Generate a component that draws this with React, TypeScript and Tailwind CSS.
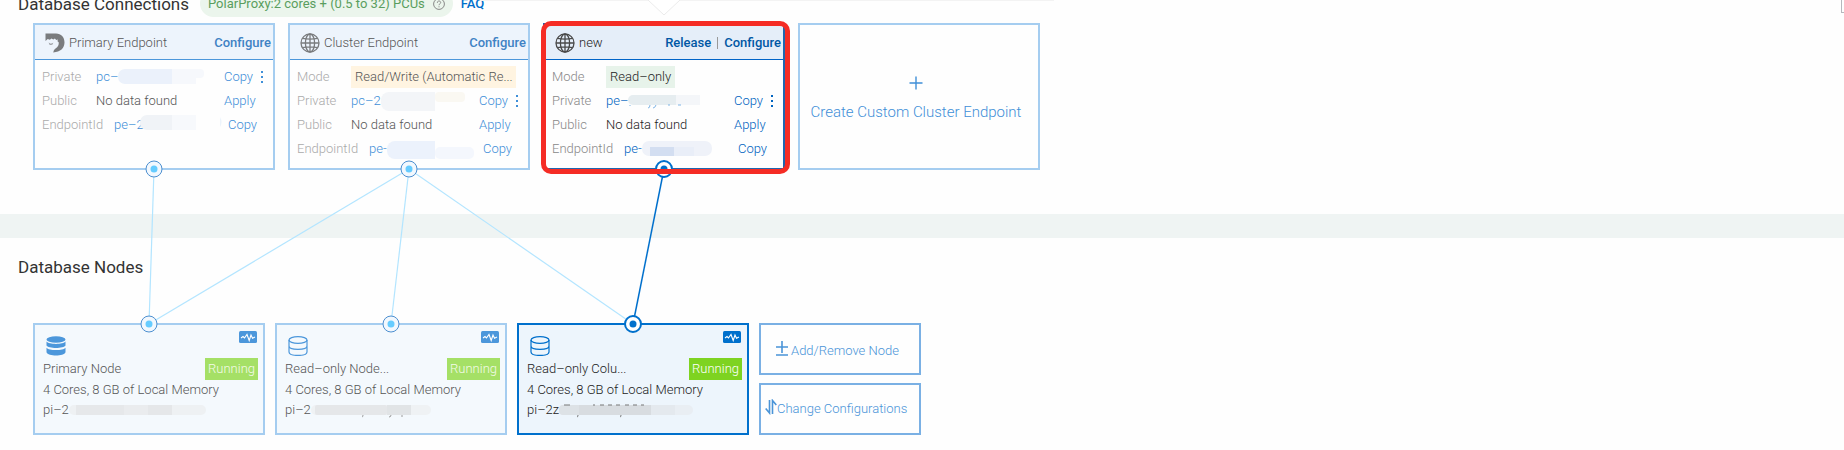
import { ReactNode } from 'react';
import clsx from 'clsx';

interface EndpointRow {
  label: string;
  value: string;
  action?: string;
  menu?: boolean;
  kind?: 'tag' | 'link' | 'text';
  mask?: ReactNode;
}

interface Endpoint {
  name: string;
  icon: 'primary' | 'globe';
  active?: boolean;
  rows: EndpointRow[];
}

interface DbNode {
  name: string;
  id: string;
  primary?: boolean;
  active?: boolean;
  mask: ReactNode;
}

const endpoints: Endpoint[] = [
  {
    name: 'Primary Endpoint',
    icon: 'primary',
    rows: [
      {
        label: 'Private',
        value: 'pc–',
        action: 'Copy',
        menu: true,
        kind: 'link',
        mask: (
          <Mask>
            <rect width="54" height="15" rx="7" fill="#ebf1fb" />
            <rect x="40" width="14" height="15" fill="#ebf1fb" />
            <rect x="54" width="32" height="9" rx="4" fill="#f6f8fc" />
            <rect x="54" width="24" height="15" fill="#f6f8fc" />
          </Mask>
        ),
      },
      { label: 'Public', value: 'No data found', action: 'Apply', kind: 'text' },
      {
        label: 'EndpointId',
        value: 'pe–2',
        action: 'Copy',
        kind: 'link',
        mask: (
          <Mask shift>
            <rect y="-2" width="32" height="15" rx="7" fill="#f0f3f7" />
            <rect x="20" y="-2" width="12" height="15" fill="#f0f3f7" />
            <rect x="32" y="-2" width="24" height="15" fill="#f7f9fc" />
            <path d="M80 0q3 5 0 10z" fill="#edf4fc" />
          </Mask>
        ),
      },
    ],
  },
  {
    name: 'Cluster Endpoint',
    icon: 'globe',
    rows: [
      { label: 'Mode', value: 'Read/Write (Automatic Re...', kind: 'tag' },
      {
        label: 'Private',
        value: 'pc–2',
        action: 'Copy',
        menu: true,
        kind: 'link',
        mask: (
          <Mask>
            <rect y="-1" width="54" height="19" rx="8" fill="#f3f5f8" />
            <rect x="40" y="-1" width="14" height="19" fill="#f3f5f8" />
            <rect x="54" y="-1" width="30" height="10" rx="4" fill="#faf8f2" />
          </Mask>
        ),
      },
      { label: 'Public', value: 'No data found', action: 'Apply', kind: 'text' },
      {
        label: 'EndpointId',
        value: 'pe-',
        action: 'Copy',
        kind: 'link',
        mask: (
          <Mask>
            <rect width="48" height="18" rx="8" fill="#ecf2fc" />
            <rect x="30" width="18" height="18" fill="#ecf2fc" />
            <rect x="48" y="6" width="39" height="12" rx="5" fill="#f4f7fd" />
          </Mask>
        ),
      },
    ],
  },
  {
    name: 'new',
    icon: 'globe',
    active: true,
    rows: [
      { label: 'Mode', value: 'Read–only', kind: 'tag' },
      {
        label: 'Private',
        value: 'pe–',
        action: 'Copy',
        menu: true,
        kind: 'link',
        mask: (
          <Mask>
            <rect y="2" width="48" height="10" rx="5" fill="#e6edf0" />
            <rect x="30" y="2" width="18" height="10" fill="#e6edf0" />
            <rect x="48" y="2" width="24" height="10" fill="#f4f6f9" />
            <path d="M2 12v1M22 12q0 3-2 3M28 12q-1 3-3 3M40 12h2M50 12h3" stroke="#7fb5e6" fill="none" />
          </Mask>
        ),
      },
      { label: 'Public', value: 'No data found', action: 'Apply', kind: 'text' },
      {
        label: 'EndpointId',
        value: 'pe-',
        action: 'Copy',
        kind: 'link',
        mask: (
          <Mask>
            <rect width="70" height="15" rx="7" fill="#eff2f9" />
            <rect x="8" y="6" width="24" height="9" fill="#d3def1" />
            <rect x="32" y="6" width="20" height="9" fill="#e9eef8" />
          </Mask>
        ),
      },
    ],
  },
];

const nodes: DbNode[] = [
  {
    name: 'Primary Node',
    id: 'pi–2',
    primary: true,
    mask: (
      <Mask wide>
        <rect width="137" height="10" rx="5" fill="#eef1f3" />
        <rect x="7" width="48" height="10" fill="#e6e8ea" />
        <rect x="55" width="24" height="10" fill="#eaecee" />
        <rect x="79" width="24" height="10" fill="#e5e7e9" />
      </Mask>
    ),
  },
  {
    name: 'Read–only Node...',
    id: 'pi–2',
    mask: (
      <Mask wide>
        <rect width="120" height="10" rx="5" fill="#eff2f4" />
        <rect x="4" width="72" height="10" rx="2" fill="#e5e7e9" />
        <rect x="76" width="24" height="10" fill="#e1e4e6" />
        <path d="M52 10q0 2-1 2M80 10q0 2-2 2M91 10v2" stroke="#9a9a9a" fill="none" />
      </Mask>
    ),
  },
  {
    name: 'Read–only Colu...',
    id: 'pi–2z',
    active: true,
    mask: (
      <Mask wide>
        <rect width="134" height="10" rx="5" fill="#e9eef3" />
        <rect width="44" height="10" rx="4" fill="#dde2e6" />
        <rect x="20" width="72" height="10" fill="#d8dce0" />
        <rect x="92" width="24" height="10" fill="#e4e9ee" />
        <path d="M5 0h6M34 0h2M41 0h4M49 0h4M57 0h4M66 0h4M74 0h4M82 0h3M19 10q0 2-1 2M62 10q0 2-1 2" stroke="#777" fill="none" />
      </Mask>
    ),
  },
];

// grey blocks hiding the rest of an id
function Mask({ children, wide, shift }: { children: ReactNode; wide?: boolean; shift?: boolean }) {
  return (
    <svg
      className={clsx('h-5 shrink-0', wide ? 'w-[140px]' : 'w-[88px]', shift && '-ml-1')}
      viewBox={wide ? '0 -5 140 20' : '0 -2 88 20'}
    >
      {children}
    </svg>
  );
}

function GlobeIcon() {
  return (
    <svg className="size-5" viewBox="0 0 20 20" fill="none" stroke="#4a4a4a" strokeWidth="1.3">
      <circle cx="10" cy="10" r="9" />
      <ellipse cx="10" cy="10" rx="4.6" ry="9" />
      <path d="M10 1v18M2.5 5.4q7.5 1.6 15 0M1 10h18M2.5 14.6q7.5-1.6 15 0" />
    </svg>
  );
}

function PrimaryIcon() {
  return (
    <svg className="size-5" viewBox="0 0 20 20" fill="#4a4a4a">
      <path d="M.5.500h10.500c5.200 0 8.500 3.700 8.500 8.800 0 5.900-4 9.700-11.300 10.200l.8-2.600 1.500-1.300c2.500-1.600 3.600-3.700 3.200-6.300l-1.200-1.100.3-1.700-1.600.5-1.300-1.500-1.600 1-1.900-.9-1.500 1.100-2.200-.6L.5 8z" />
      <path d="M3.600 9.600l2.200 1.200 2.500-1.100-1 2-2.600.3z" opacity=".7" />
    </svg>
  );
}

function DbIcon({ solid, active }: { solid?: boolean; active?: boolean }) {
  if (solid) {
    return (
      <svg className="size-5" viewBox="0 0 20 20" fill="#4c97db">
        <ellipse cx="10" cy="3.5" rx="9.5" ry="3.3" />
        <path d="M.5 5.5c2 3.200 17 3.200 19 0v4c-1.500 3.300-17.500 3.300-19 0z" />
        <path d="M.5 11.700c2 3.200 17 3.200 19 0v4.500c-1.500 4.300-17.500 4.300-19 0z" />
      </svg>
    );
  }
  return (
    <svg className="size-5" viewBox="0 0 20 20" fill="none" stroke={active ? '#0070cc' : '#4c97db'} strokeWidth="1.2">
      <ellipse cx="10" cy="4" rx="9" ry="3.4" />
      <path d="M1 4v12c0 4.600 18 4.600 18 0V4M1 10c0 4.500 18 4.500 18 0" />
    </svg>
  );
}

function EndpointCard({ endpoint }: { endpoint: Endpoint }) {
  const { active } = endpoint;
  const link = active ? 'text-[#0064c0]' : 'text-[#3f8fd8]';
  const strong = active ? 'text-[#0058a5]' : 'text-[#3f82c4]';

  return (
    <article className={clsx('h-[147px] w-[242px] shrink-0 border-2', active ? 'border-[#1f66b0]' : 'border-[#a5cdf0]')}>
      <header
        className={clsx(
          'flex h-[35px] items-center border-b pl-2.5 pr-0.5 pt-0.5',
          active ? 'border-[#0064c8] bg-[#e5eef9]' : 'border-[#4c97db] bg-[#edf4fc]'
        )}
      >
        <span className={clsx('mr-1', !active && 'opacity-70')}>
          {endpoint.icon === 'globe' ? <GlobeIcon /> : <PrimaryIcon />}
        </span>
        <h3 className={clsx('flex-1 font-light', active ? 'text-[#222]' : 'text-[#555]')}>{endpoint.name}</h3>
        {active && (
          <>
            <button className={clsx('font-medium', strong)}>Release</button>
            <span className="mx-1.5 h-3 w-px bg-[#999]" />
          </>
        )}
        <button className={clsx('font-medium', strong)}>Configure</button>
      </header>
      <div className="py-[5px] pl-[7px] pr-2">
        {endpoint.rows.map((row) => {
          const isId = row.label === 'EndpointId';
          return (
            <div key={row.label} className="flex h-6 items-center">
              <span className={clsx('shrink-0', isId ? 'w-[72px]' : 'w-[54px]', active ? 'text-[#888]' : 'text-[#aaa]')}>
                {row.label}
              </span>
              {row.kind === 'tag' ? (
                <span
                  className={clsx(
                    'whitespace-nowrap px-1 leading-[22px]',
                    active ? 'bg-[#e7f3ea] text-[#222]' : 'w-[165px] bg-[#fff4e1] text-[#555]'
                  )}
                >
                  {row.value}
                </span>
              ) : (
                <span
                  className={clsx(
                    'flex shrink-0 items-center overflow-hidden',
                    isId ? 'w-[114px]' : 'w-[128px]',
                    row.kind === 'link' ? link : active ? 'text-[#222]' : 'text-[#555]'
                  )}
                >
                  {row.value}
                  {row.mask}
                </span>
              )}
              {row.action && <button className={link}>{row.action}</button>}
              {row.menu && (
                <button aria-label="More" className={clsx('ml-[5px]', link)}>
                  <svg className="h-3 w-2" viewBox="0 0 8 12" fill="currentColor">
                    <path d="M3 0h2v2H3zM3 5h2v2H3zM3 10h2v2H3z" />
                  </svg>
                </button>
              )}
            </div>
          );
        })}
      </div>
    </article>
  );
}

function NodeCard({ node }: { node: DbNode }) {
  const { active } = node;
  return (
    <article
      className={clsx(
        'flex h-28 w-[232px] shrink-0 flex-col border-2 pl-2 pr-[5px]',
        active ? 'border-[#0070cc] bg-[#edf5fc] text-[#222]' : 'border-[#a5cdf0] bg-[#f4f9fd] text-[#555]'
      )}
    >
      <div className="flex h-[31px] items-end justify-between pl-[3px] pr-px">
        <DbIcon solid={node.primary} active={active} />
        <button aria-label="Monitoring" className="self-start pt-1.5">
          <svg className="h-3 w-[18px]" viewBox="0 0 18 12">
            <rect width="18" height="12" rx="1.5" fill={active ? '#0070cc' : '#4c97db'} />
            <path
              d="M2 7l2-1.500 1.500 1.500 2.500-3.500 2.200 6L12 4l1.500 3.200L16 6"
              fill="none"
              stroke="#fff"
              strokeWidth="1.1"
            />
          </svg>
        </button>
      </div>
      <div className="mt-0.5 flex h-[22px] items-center justify-between">
        <h3 className="font-light">{node.name}</h3>
        <span className={clsx('px-[3px] leading-[22px]', active ? 'bg-[#7ed321] text-white' : 'bg-[#a5e066] text-[#f4fbe9]')}>
          Running
        </span>
      </div>
      <p className="h-5 leading-5">4 Cores, 8 GB of Local Memory</p>
      <p className="flex h-5 items-center">
        {node.id}
        {node.mask}
      </p>
    </article>
  );
}

const links = [
  { from: 154, to: 149 },
  { from: 409, to: 149 },
  { from: 409, to: 391 },
  { from: 409, to: 633 },
  { from: 664, to: 633, active: true },
];

const ports = [
  { x: 154, y: 169 },
  { x: 409, y: 169 },
  { x: 664, y: 169, active: true },
  { x: 149, y: 324 },
  { x: 391, y: 324 },
  { x: 633, y: 324, active: true },
];

function Topology() {
  return (
    <svg className="pointer-events-none absolute left-0 top-0" width="1100" height="450" fill="none">
      {links.map((l) => (
        <path
          key={`${l.from}-${l.to}`}
          d={`M${l.from} 169L${l.to} 324`}
          stroke={l.active ? '#0070cc' : '#b3e5ff'}
          strokeWidth={l.active ? 1.5 : 1.2}
        />
      ))}
      {ports.map((p) => (
        <g key={`${p.x}-${p.y}`}>
          <circle
            cx={p.x}
            cy={p.y}
            r="8"
            fill={p.active ? '#fff' : '#f2f8fe'}
            stroke={p.active ? '#0070cc' : '#4c8fd0'}
            strokeWidth={p.active ? 2 : 1}
          />
          <circle cx={p.x} cy={p.y} r="3.5" fill={p.active ? '#0070cc' : '#66ccff'} />
        </g>
      ))}
    </svg>
  );
}

export default function App() {
  return (
    <main className="relative overflow-hidden bg-[#fefefe] pb-4 font-['Roboto',sans-serif] text-[13px] font-light leading-5">
      <section className="pb-11">
        <div className="-mt-2.5 flex h-[33px] items-start pl-[18px]">
          <h2 className="mt-0.5 w-[182px] text-[17px] font-normal leading-6 text-[#333]">Database Connections</h2>
          <span className="flex h-[27px] items-center gap-2 rounded-full bg-[#ebf5ec] px-2 font-normal text-[#5a9e5e]">
            PolarProxy:2 cores + (0.5 to 32) PCUs
            <svg className="size-3" viewBox="0 0 12 12" fill="none" stroke="#888">
              <circle cx="6" cy="6" r="5.4" />
              <path d="M4.300 4.800c0-2.400 3.400-2.300 3.400-.2C7.700 5.800 6 5.800 6 7.200M6 8.300v1" />
            </svg>
          </span>
          <a href="#" className="ml-2 mt-1 font-medium text-[#0070cc]">FAQ</a>
        </div>
        <div className="flex gap-[13px] pl-[33px]">
          {endpoints.map((e) => (
            <EndpointCard key={e.name} endpoint={e} />
          ))}
          <button className="flex h-[147px] w-[242px] shrink-0 flex-col items-center justify-center gap-3 border-2 border-[#a5cdf0] pr-1.5 pt-1 text-[15px] font-light text-[#3f8fd8]">
            <svg className="size-3.5" viewBox="0 0 14 14" fill="none" stroke="currentColor" strokeWidth="1.4">
              <path d="M7 .5v13M.5 7h13" />
            </svg>
            Create Custom Cluster Endpoint
          </button>
        </div>
      </section>

      <div className="h-6 bg-[#eff4f3]" />

      <section className="pt-[17px]">
        <h2 className="pl-[18px] text-[17px] font-normal leading-6 text-[#333]">Database Nodes</h2>
        <div className="mt-11 flex gap-2.5 pl-[33px]">
          {nodes.map((n) => (
            <NodeCard key={n.name} node={n} />
          ))}
          <div className="flex w-[162px] shrink-0 flex-col gap-2 text-[#4a94d8]">
            <button className="flex h-[52px] items-center gap-0.5 border-2 border-[#7ab0e4] pl-3.5 pt-1">
              <svg className="mb-1 h-4 w-3.5" viewBox="0 0 14 16" fill="none" stroke="currentColor" strokeWidth="1.6">
                <path d="M7 0v12M1 6h12M1 14h12" />
              </svg>
              Add/Remove Node
            </button>
            <button className="flex h-[52px] items-center border-2 border-[#7ab0e4] pl-1">
              <svg className="mb-1 h-4 w-3" viewBox="0 0 12 16" fill="none" stroke="currentColor" strokeWidth="1.6">
                <path d="M4.500 1v13L.7 9.500M7.500 15V1.500l3.800 4.500" />
              </svg>
              Change Configurations
            </button>
          </div>
        </div>
      </section>

      <Topology />

      {/* highlight around the selected endpoint */}
      <div className="pointer-events-none absolute left-[541px] top-[21px] h-[153px] w-[249px] rounded-[10px] border-[5px] border-[#f52c25]" />

      {/* bottom edge of the popover above */}
      <svg className="pointer-events-none absolute left-[480px] top-0 h-4 w-[574px]" viewBox="0 0 574 16" fill="none">
        <path d="M0 0H574" stroke="#f3f3f3" strokeWidth="2" />
        <path d="M168 0l16 15 16-15" fill="#fff" stroke="#ebebeb" />
      </svg>
      <div className="absolute right-0 top-0 h-[13px] w-[3px] border-b border-l border-[#b5b8bd]" />
    </main>
  );
}
